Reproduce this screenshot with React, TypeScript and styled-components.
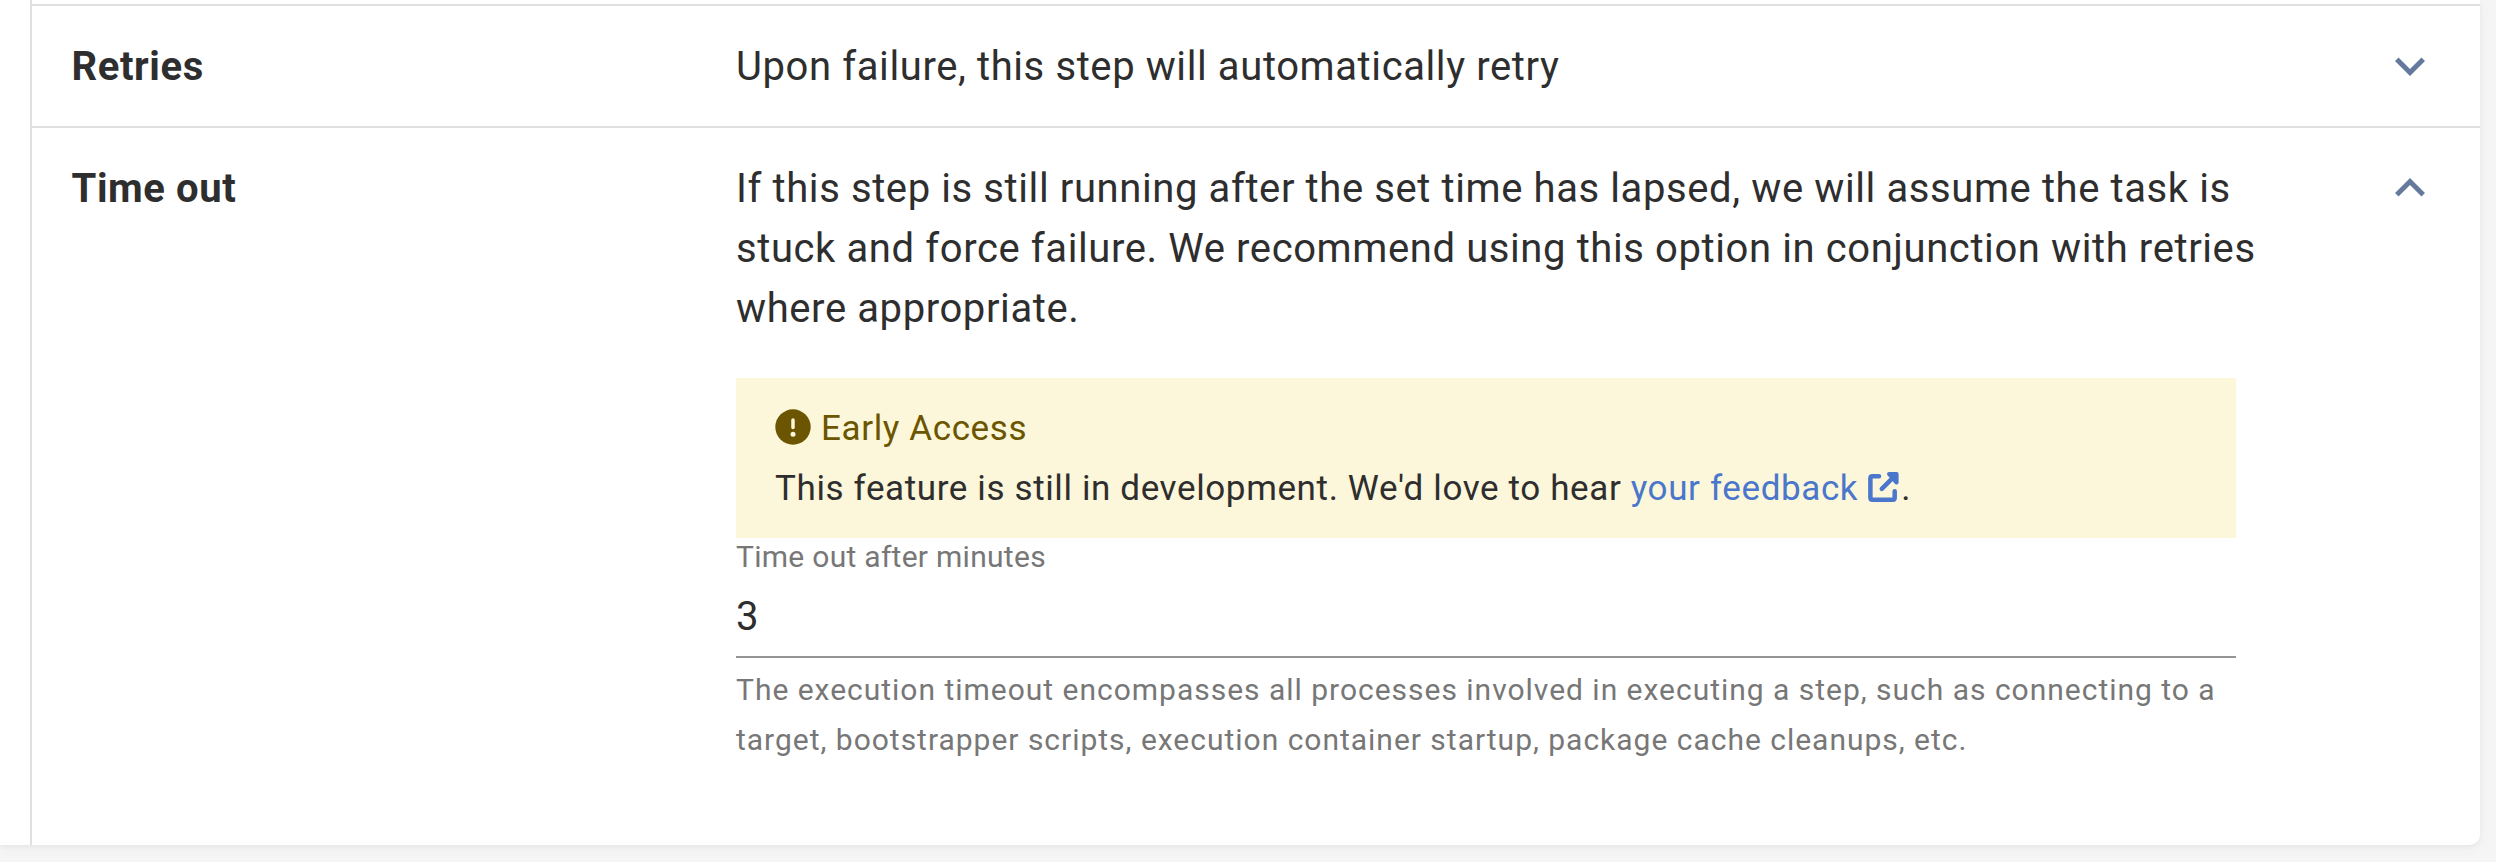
import React from "react";
import styled, { createGlobalStyle } from "styled-components";

const Global = createGlobalStyle`
  * { box-sizing: border-box; }
  body { margin: 0; background: #f5f5f5; font-family: Roboto, "Liberation Sans", sans-serif; color: #2e2e2e; }
`;

const Page = styled.div`
  height: 862px;
  overflow: hidden;
  background: #f5f5f5;
`;

const Paper = styled.div`
  width: 2480px;
  height: 845px;
  padding-left: 30px;
  background: #fff;
  border-radius: 0 0 10px 0;
  box-shadow: 0 2px 5px rgba(0, 0, 0, 0.04), 0 2px 14px rgba(0, 0, 0, 0.04);
`;

const Steps = styled.div`
  height: 845px;
  padding-top: 4px;
  border-left: 2px solid #e0e0e0;
`;

const Row = styled.section<{ $height: number }>`
  display: grid;
  grid-template-columns: 664.5px 1542px 1fr;
  align-items: start;
  height: ${(p) => p.$height}px;
  padding: 31px 40px 0 39.5px;
  border-top: 2px solid #e0e0e0;
`;

const Title = styled.h2`
  margin: 0;
  font-size: 40px;
  line-height: 60px;
  font-weight: 700;
  letter-spacing: 0.6px;
`;

const Summary = styled.p`
  margin: 0;
  font-size: 40px;
  line-height: 60px;
  letter-spacing: 0.6px;
  white-space: nowrap;
`;

const Toggle = styled.button`
  display: flex;
  justify-content: flex-end;
  height: 60px;
  margin-top: -1px;
  padding: 0;
  border: 0;
  background: none;
`;

const Details = styled.div`
  width: 1500px;
`;

const Callout = styled.div`
  height: 160px;
  margin-top: 39px;
  padding: 20px 39px;
  background: #fcf6da;
`;

const CalloutTitle = styled.div`
  display: flex;
  align-items: center;
  gap: 10px;
  height: 60px;
  font-size: 35px;
  letter-spacing: 0.62px;
  color: #6b5500;
`;

const AlertIcon = styled.svg`
  margin-bottom: 3px;
`;

const CalloutText = styled.p`
  display: flex;
  align-items: center;
  height: 60px;
  margin: 0;
  font-size: 35px;
  letter-spacing: 0.62px;
  white-space: pre;
`;

const Link = styled.a`
  display: flex;
  align-items: center;
  gap: 9px;
  color: #4a76cc;
`;

const Label = styled.label`
  display: block;
  height: 40px;
  font-size: 30px;
  line-height: 38px;
  letter-spacing: 0.28px;
  color: #777;
`;

const Value = styled.div`
  height: 80px;
  border-bottom: 2px solid #949494;
  font-size: 40px;
  line-height: 78px;
`;

const Help = styled.p`
  margin: 7px 0 0;
  font-size: 30px;
  line-height: 50px;
  letter-spacing: 0.985px;
  color: #777;
  white-space: nowrap;
`;

function Chevron({ up = false }: { up?: boolean }) {
  return (
    <svg width="60" height="60" viewBox="0 0 24 24" fill="#64799c">
      <path
        d={
          up
            ? "M12 8l-6 6 1.41 1.41L12 10.83l4.59 4.58L18 14z"
            : "M16.59 8.59L12 13.17 7.41 8.59 6 10l6 6 6-6z"
        }
      />
    </svg>
  );
}

export default function App() {
  return (
    <Page>
      <Global />
      <Paper>
        <Steps>
          <Row $height={122}>
            <Title>Retries</Title>
            <Summary>Upon failure, this step will automatically retry</Summary>
            <Toggle aria-label="Expand"><Chevron /></Toggle>
          </Row>
          <Row $height={719}>
            <Title>Time out</Title>
            <Details>
              <Summary>
                If this step is still running after the set time has lapsed, we will assume the task is<br />
                stuck and force failure. We recommend using this option in conjunction with retries<br />
                where appropriate.
              </Summary>
              <Callout>
                <CalloutTitle>
                  <AlertIcon width="36" height="36" viewBox="0 0 36 36">
                    <circle cx="18" cy="18" r="17.7" fill="#6b5500" />
                    <path d="M18 11V18.4" stroke="#fcf6da" strokeWidth="3.5" strokeLinecap="round" />
                    <circle cx="18" cy="25.3" r="2.5" fill="#fcf6da" />
                  </AlertIcon>
                  Early Access
                </CalloutTitle>
                <CalloutText>
                  {"This feature is still in development. We'd love to hear "}
                  <Link>
                    your feedback
                    <svg width="34" height="34" viewBox="0 0 34 34" fill="none" stroke="#4a76cc" strokeWidth="4.5" strokeLinecap="round" strokeLinejoin="round">
                      <path d="M12 5.2H5.4Q3.4 5.2 3.4 7.2V26.8Q3.4 28.8 5.4 28.8H25.7Q27.7 28.8 27.7 26.8V20.2" />
                      <path d="M22 3H29.6V11.6Z" fill="#4a76cc" strokeWidth="4" />
                      <path d="M28.5 4.2L14.8 17.8" />
                    </svg>
                  </Link>
                  .
                </CalloutText>
              </Callout>
              <Label>Time out after minutes</Label>
              <Value>3</Value>
              <Help>
                The execution timeout encompasses all processes involved in executing a step, such as connecting to a<br />
                target, bootstrapper scripts, execution container startup, package cache cleanups, etc.
              </Help>
            </Details>
            <Toggle aria-label="Collapse"><Chevron up /></Toggle>
          </Row>
        </Steps>
      </Paper>
    </Page>
  );
}
